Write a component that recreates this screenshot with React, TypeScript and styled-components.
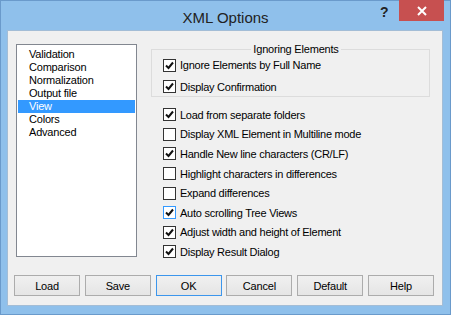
import styled, { createGlobalStyle } from 'styled-components'

const GlobalStyle = createGlobalStyle`
    html, body {
        margin: 0;
        padding: 0;
        background: #8fc0eb;
    }
    body {
        font-family: "Liberation Sans", Arial, sans-serif;
        font-size: 11px;
        color: #000;
    }
`

const Window = styled.div`
    box-sizing: border-box;
    width: 451px;
    height: 315px;
    background: #8fc0eb;
    border: 1px solid #6a9acb;
    display: flex;
    flex-direction: column;
`

const TitleBar = styled.div`
    height: 29px;
    flex: none;
    position: relative;
    display: flex;
    justify-content: center;
`

const Title = styled.div`
    font-size: 15px;
    line-height: 15px;
    padding-top: 9px;
    color: #222;
`

const HelpGlyph = styled.span`
    position: absolute;
    left: 379px;
    top: 3px;
    font-weight: bold;
    font-size: 14px;
    color: #222;
`

const CloseButton = styled.div`
    position: absolute;
    left: 398px;
    top: -1px;
    width: 45px;
    height: 21px;
    background: #c75050;
    display: flex;
    align-items: center;
    justify-content: center;
`

const Body = styled.div`
    box-sizing: border-box;
    margin: 0 7px 8px 6px;
    flex: 1;
    background: #f0f0f0;
    border: 1px solid #a3bdd6;
    display: flex;
    flex-direction: column;
`

const Main = styled.div`
    display: flex;
    gap: 14px;
    height: 213px;
    padding: 13px 0 0 8px;
`

const ListBox = styled.div`
    box-sizing: border-box;
    width: 121px;
    height: 213px;
    background: #fff;
    border: 1px solid #828790;
    padding: 3px 1px;
`

const ListItem = styled.div<{ $selected?: boolean }>`
    height: 13px;
    line-height: 13px;
    padding-left: 11px;
    letter-spacing: -0.2px;
    background: ${p => (p.$selected ? '#3399ff' : 'transparent')};
    color: ${p => (p.$selected ? '#fff' : '#000')};
`

const Options = styled.div`
    width: 279px;
    display: flex;
    flex-direction: column;
`

const Group = styled.fieldset`
    box-sizing: border-box;
    margin: 0;
    height: 53px;
    border: 1px solid #dcdcdc;
    padding: 0 0 0 11px;

    legend {
        margin: 0 auto;
        padding: 0 2px;
        line-height: 11px;
        letter-spacing: -0.2px;
    }
`

const Row = styled.label<{ $h: number }>`
    display: flex;
    align-items: center;
    gap: 4px;
    height: ${p => p.$h}px;
    letter-spacing: -0.25px;
    white-space: nowrap;
`

const Plain = styled.div`
    padding: 8px 0 0 12px;
`

const Box = styled.span<{ $hover?: boolean }>`
    box-sizing: border-box;
    width: 13px;
    height: 13px;
    flex: none;
    background: #fff;
    border: 1px solid ${p => (p.$hover ? '#3399ff' : '#333')};
    display: flex;
    align-items: center;
    justify-content: center;
`

const ButtonRow = styled.div`
    display: flex;
    justify-content: space-between;
    margin-top: auto;
    padding: 0 8px 9px 6px;
`

const Button = styled.div<{ $default?: boolean }>`
    box-sizing: border-box;
    width: 66px;
    height: 21px;
    border: 1px solid ${p => (p.$default ? '#3c96ec' : '#acacac')};
    background: linear-gradient(#f0f0f0, #e5e5e5);
    display: flex;
    align-items: center;
    justify-content: center;
    letter-spacing: -0.2px;
`

function Check() {
    return (
        <svg width="9" height="9" viewBox="0 0 9 9">
            <path d="M1 4.5 L3.5 7 L8 1.5" fill="none" stroke="#111" strokeWidth="2" />
        </svg>
    )
}

interface OptionProps {
    label: string
    checked?: boolean
    hover?: boolean
    h: number
}

function Option({ label, checked, hover, h }: OptionProps) {
    return (
        <Row $h={h}>
            <Box $hover={hover}>{checked && <Check />}</Box>
            {label}
        </Row>
    )
}

const pages = ['Validation', 'Comparison', 'Normalization', 'Output file', 'View', 'Colors', 'Advanced']

const options = [
    { label: 'Load from separate folders', checked: true },
    { label: 'Display XML Element in Multiline mode' },
    { label: 'Handle New line characters (CR/LF)', checked: true },
    { label: 'Highlight characters in differences' },
    { label: 'Expand differences' },
    { label: 'Auto scrolling Tree Views', checked: true, hover: true },
    { label: 'Adjust width and height of Element', checked: true },
    { label: 'Display Result Dialog', checked: true },
]

export default function App() {
    return (
        <>
            <GlobalStyle />
            <Window>
                <TitleBar>
                    <Title>XML Options</Title>
                    <HelpGlyph>?</HelpGlyph>
                    <CloseButton>
                        <svg width="10" height="10" viewBox="0 0 10 10">
                            <path d="M1 1 L9 9 M9 1 L1 9" stroke="#fff" strokeWidth="2" />
                        </svg>
                    </CloseButton>
                </TitleBar>
                <Body>
                    <Main>
                        <ListBox>
                            {pages.map(p => (
                                <ListItem key={p} $selected={p === 'View'}>
                                    {p}
                                </ListItem>
                            ))}
                        </ListBox>
                        <Options>
                            <Group>
                                <legend>Ignoring Elements</legend>
                                <Option label="Ignore Elements by Full Name" checked h={20} />
                                <Option label="Display Confirmation" checked h={23} />
                            </Group>
                            <Plain>
                                {options.map(o => (
                                    <Option key={o.label} label={o.label} checked={o.checked} hover={o.hover} h={19.6} />
                                ))}
                            </Plain>
                        </Options>
                    </Main>
                    <ButtonRow>
                        <Button>Load</Button>
                        <Button>Save</Button>
                        <Button $default>OK</Button>
                        <Button>Cancel</Button>
                        <Button>Default</Button>
                        <Button>Help</Button>
                    </ButtonRow>
                </Body>
            </Window>
        </>
    )
}
